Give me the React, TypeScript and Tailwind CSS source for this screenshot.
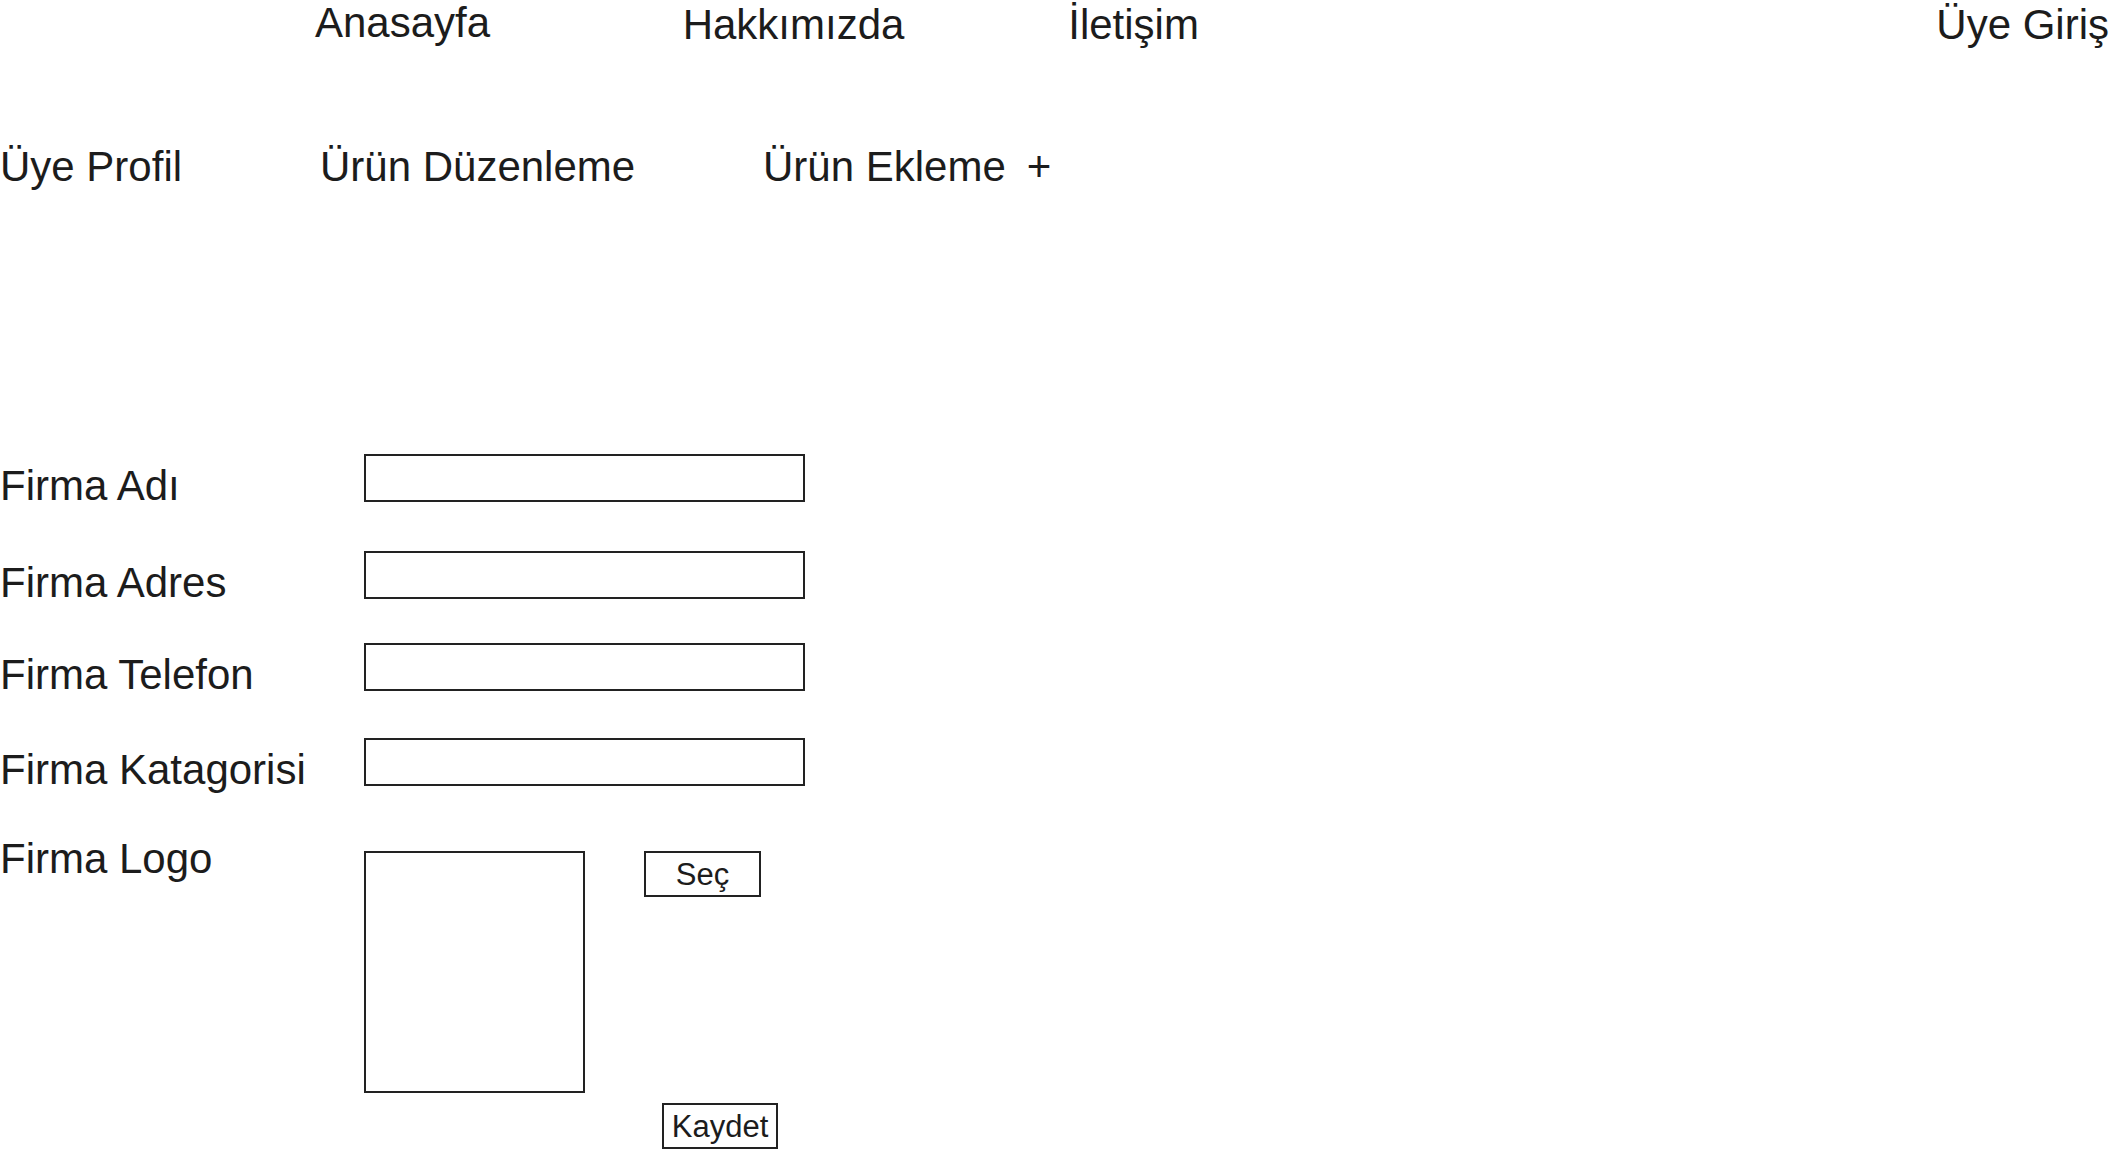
import React from 'react';

const font = { fontFamily: '"Liberation Sans", Arial, Helvetica, sans-serif' };

const fields = [
  { label: 'Firma Adı', gap: 'mt-0' },
  { label: 'Firma Adres', gap: 'mt-[49px]' },
  { label: 'Firma Telefon', gap: 'mt-[44px]' },
  { label: 'Firma Katagorisi', gap: 'mt-[47px]' },
];

export default function App() {
  return (
    <div
      style={font}
      className="w-[2109px] h-[1152px] overflow-hidden bg-white text-[#1c1c1c] text-[42px] leading-none"
    >
      {/* ust menu */}
      <nav className="pt-[2px] flex items-start whitespace-nowrap">
        <a className="ml-[315px] w-[368px]">Anasayfa</a>
        <a className="mt-[2px] w-[386px]">Hakkımızda</a>
        <a className="mt-[2px] w-[869px]">İletişim</a>
        <a className="mt-[2px]">Üye Giriş</a>
      </nav>

      {/* alt menu */}
      <div className="mt-[100px] flex items-start whitespace-nowrap">
        <a className="w-[320px]">Üye Profil</a>
        <a className="w-[443px]">Ürün Düzenleme</a>
        <a className="flex">
          Ürün Ekleme<span className="ml-[21px]">+</span>
        </a>
      </div>

      {/* form */}
      <form className="mt-[266px] flex flex-col">
        {fields.map((f) => (
          <div key={f.label} className={`h-[48px] flex items-start ${f.gap}`}>
            <label className="w-[364px] mt-[11px] whitespace-nowrap">{f.label}</label>
            <input
              type="text"
              className="w-[441px] h-[48px] border-2 border-[#222] bg-white outline-none"
            />
          </div>
        ))}

        <div className="mt-[52px] flex items-start">
          <label className="w-[364px] whitespace-nowrap">Firma Logo</label>
          <div className="mt-[13px] w-[221px] h-[242px] border-2 border-[#222]" />
          <div className="ml-[59px] mt-[13px] flex flex-col items-start">
            <button
              type="button"
              className="w-[117px] h-[46px] border-2 border-[#222] text-[31px] leading-none flex items-center justify-center"
            >
              Seç
            </button>
            <button
              type="button"
              className="ml-[18px] mt-[206px] w-[116px] h-[46px] border-2 border-[#222] text-[31px] leading-none flex items-center justify-center"
            >
              Kaydet
            </button>
          </div>
        </div>
      </form>
    </div>
  );
}
